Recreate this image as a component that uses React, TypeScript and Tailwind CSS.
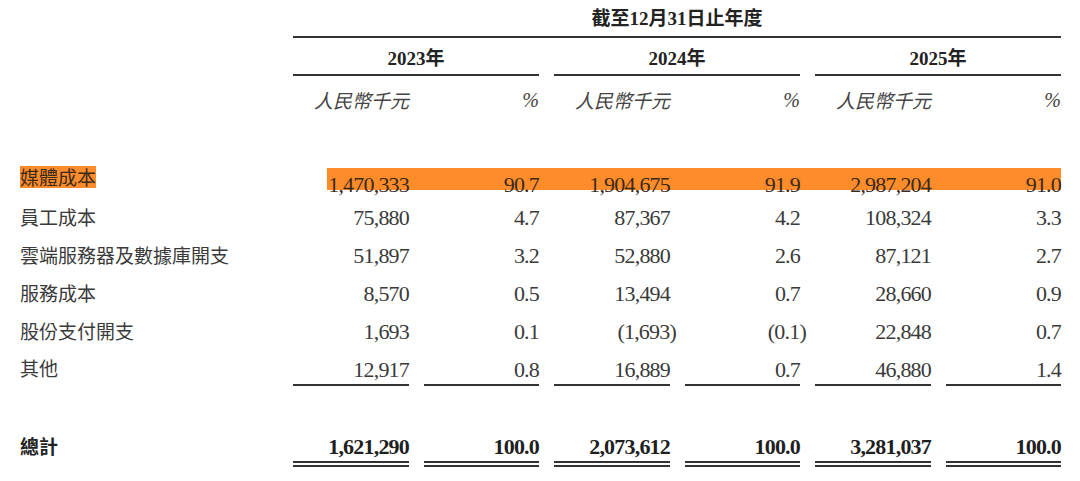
import React from 'react';

type Row = {
  label: string;
  values: string[];
  highlight?: boolean;
};

const rows: Row[] = [
  { label: '媒體成本', values: ['1,470,333', '90.7', '1,904,675', '91.9', '2,987,204', '91.0'], highlight: true },
  { label: '員工成本', values: ['75,880', '4.7', '87,367', '4.2', '108,324', '3.3'] },
  { label: '雲端服務器及數據庫開支', values: ['51,897', '3.2', '52,880', '2.6', '87,121', '2.7'] },
  { label: '服務成本', values: ['8,570', '0.5', '13,494', '0.7', '28,660', '0.9'] },
  { label: '股份支付開支', values: ['1,693', '0.1', '(1,693)', '(0.1)', '22,848', '0.7'] },
  { label: '其他', values: ['12,917', '0.8', '16,889', '0.7', '46,880', '1.4'] },
];

const totals = ['1,621,290', '100.0', '2,073,612', '100.0', '3,281,037', '100.0'];
const years = ['2023年', '2024年', '2025年'];

const serif = "font-['Liberation_Serif','Noto_Sans_CJK_TC',serif]";
const cjk = "font-['Noto_Sans_CJK_TC','Noto_Sans_CJK_SC',sans-serif]";
const grid = 'grid grid-cols-[116px_115px_116px_115px_116px_115px] gap-x-[15px]';

function Num({ value, bold }: { value: string; bold?: boolean }) {
  const negative = value.startsWith('(');
  return (
    <span className={`${negative ? '-mr-[6px]' : ''} ${bold ? 'font-bold text-[#1f1f1f]' : ''}`}>{value}</span>
  );
}

export default function App() {
  return (
    <div className="w-[1080px] h-[481px] bg-white overflow-hidden pl-[20px] text-[#3a3a3a]">
      {/* Column headings */}
      <div className="flex">
        <div className="w-[273px] shrink-0" />
        <div className="w-[768px]">
          <div
            className={`h-[38px] pt-[2px] flex items-center justify-center border-b-2 border-[#333] text-[19px] font-bold text-[#222] ${serif}`}
          >
            截至12月31日止年度
          </div>
          <div className={grid}>
            {years.map((y) => (
              <div
                key={y}
                className={`col-span-2 h-[38px] pt-[6px] flex items-center justify-center border-b-2 border-[#333] text-[19px] font-bold text-[#222] ${serif}`}
              >
                {y}
              </div>
            ))}
          </div>
          <div className={`${grid} h-[48px] items-center`}>
            {years.map((y) => (
              <React.Fragment key={y}>
                <div className={`text-right text-[19px] italic text-[#444] ${cjk}`}>人民幣千元</div>
                <div className={`text-right text-[20px] italic text-[#444] ${serif}`}>%</div>
              </React.Fragment>
            ))}
          </div>
        </div>
      </div>

      {/* Body rows */}
      <div className="mt-[36px]">
        {rows.map((row, i) => {
          const last = i === rows.length - 1;
          return (
            <div key={row.label} className="flex h-[38px]">
              <div className={`w-[273px] shrink-0 flex items-center text-[19px] ${cjk} ${last ? 'pb-[2px]' : ''}`}>
                <span
                  className={
                    row.highlight
                      ? 'bg-[#ff8c2a] text-[#3a2a1a] leading-[22px] -mt-[5px]'
                      : 'leading-[22px]'
                  }
                >
                  {row.label}
                </span>
              </div>
              <div className="w-[768px] flex items-center">
                <div
                  className={`${grid} w-full text-[22px] tracking-[-0.8px] ${serif} ${
                    row.highlight
                      ? 'h-[22px] items-center bg-[linear-gradient(to_right,transparent_34px,#ff8c2a_34px)] text-[#3a2a1a]'
                      : ''
                  } ${last ? 'self-start' : ''}`}
                >
                  {row.values.map((v, j) => (
                    <div
                      key={j}
                      className={`flex justify-end items-center ${
                        last ? 'h-[36px] pt-[4px] border-b-2 border-[#333]' : ''
                      }`}
                    >
                      <Num value={v} />
                    </div>
                  ))}
                </div>
              </div>
            </div>
          );
        })}
      </div>

      {/* Total */}
      <div className="flex mt-[37px]">
        <div className={`w-[273px] shrink-0 h-[42px] pt-[6px] pb-[6px] flex items-center text-[19px] font-bold text-[#222] ${cjk}`}>
          總計
        </div>
        <div className={`${grid} w-[768px] text-[22px] tracking-[-0.8px] ${serif}`}>
          {totals.map((v, j) => (
            <div key={j} className="h-[42px] pt-[6px] flex justify-end items-center border-b-[6px] border-double border-[#333]">
              <Num value={v} bold />
            </div>
          ))}
        </div>
      </div>
    </div>
  );
}
